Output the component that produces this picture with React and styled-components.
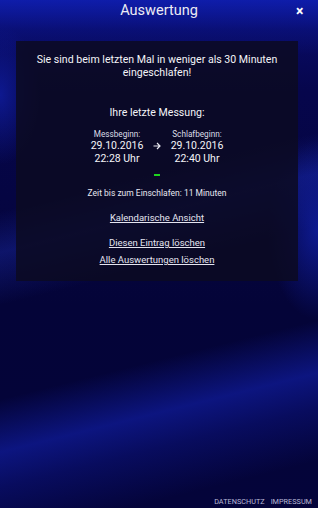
import React from "react";
import styled, { createGlobalStyle } from "styled-components";

const GlobalStyle = createGlobalStyle`
  html, body {
    margin: 0;
    padding: 0;
    height: 100%;
  }
  body {
    font-family: Roboto, "Liberation Sans", sans-serif;
    color: #ffffff;
  }
  #root {
    height: 100%;
  }
`;

const Screen = styled.div`
  position: relative;
  width: 318px;
  height: 508px;
  overflow: hidden;
  display: flex;
  flex-direction: column;
  background:
    linear-gradient(180deg, rgba(16, 34, 190, 0.75) 0px, rgba(12, 24, 150, 0.35) 30px, transparent 55px),
    radial-gradient(ellipse 40px 70px at 0px 95px, rgba(20, 40, 200, 0.55), transparent),
    radial-gradient(ellipse 50px 90px at 318px 230px, rgba(20, 40, 200, 0.6), transparent),
    linear-gradient(166deg, transparent 36%, rgba(30, 50, 190, 0.35) 43%, transparent 52%),
    linear-gradient(166deg, transparent 68%, rgba(18, 32, 175, 0.6) 77%, rgba(14, 24, 150, 0.4) 83%, transparent 92%),
    linear-gradient(180deg, #0a0d70 0%, #06064c 18%, #040438 60%, #04043a 100%);
`;

const Header = styled.div`
  height: 41px;
  display: grid;
  grid-template-columns: 30px 1fr 30px;
  align-items: start;
`;

const Title = styled.h1`
  grid-column: 2;
  margin: 0;
  padding-top: 2px;
  text-align: center;
  font-size: 14.5px;
  font-weight: 400;
  line-height: 18px;
  color: #ececf4;
`;

const Close = styled.span`
  grid-column: 3;
  padding-top: 3px;
  padding-left: 8px;
  font-size: 14px;
  font-weight: 700;
  line-height: 16px;
  color: #ffffff;
`;

const Panel = styled.section`
  margin: 0 20px 0 16px;
  height: 240px;
  box-sizing: border-box;
  padding: 12px 10px 0;
  background: rgba(12, 10, 34, 0.86);
  display: flex;
  flex-direction: column;
  align-items: center;
  text-align: center;
`;

const Notice = styled.p`
  margin: 0;
  font-size: 10.6px;
  line-height: 13px;
  color: #f4f4f8;
`;

const Heading = styled.p`
  margin: 27px 0 0;
  font-size: 10.6px;
  line-height: 13px;
  color: #f4f4f8;
`;

const Compare = styled.div`
  margin-top: 10px;
  display: grid;
  grid-template-columns: 64px 16px 64px;
  align-items: start;
`;

const Column = styled.div`
  display: flex;
  flex-direction: column;
  align-items: center;
`;

const Label = styled.span`
  font-size: 8.2px;
  line-height: 11px;
  color: #dcdce6;
`;

const Big = styled.span`
  font-size: 10.5px;
  line-height: 12.5px;
  color: #f4f4f8;
`;

const Arrow = styled.svg`
  justify-self: center;
  margin-top: 13px;
  width: 8px;
  height: 8px;
`;

const Dash = styled.div`
  margin-top: 9px;
  width: 6px;
  height: 2px;
  background: #1ed41e;
`;

const Small = styled.p`
  margin: 12px 0 0;
  font-size: 8.5px;
  line-height: 10px;
  color: #e8e8f0;
`;

const Link = styled.a`
  margin-top: ${(p) => p.gap || 0}px;
  font-size: 9.5px;
  line-height: 11px;
  color: #e4e4f0;
  text-decoration: underline;
  cursor: pointer;
`;

const Footer = styled.div`
  margin-top: auto;
  padding: 0 6px 2px 0;
  display: flex;
  justify-content: flex-end;
  gap: 6px;
`;

const FootLink = styled.span`
  font-size: 7.3px;
  line-height: 9px;
  color: #b8b8d6;
`;

export default function App() {
  return (
    <Screen>
      <GlobalStyle />
      <Header>
        <Title>Auswertung</Title>
        <Close>×</Close>
      </Header>
      <Panel>
        <Notice>
          Sie sind beim letzten Mal in weniger als 30 Minuten
          <br />
          eingeschlafen!
        </Notice>
        <Heading>Ihre letzte Messung:</Heading>
        <Compare>
          <Column>
            <Label>Messbeginn:</Label>
            <Big>29.10.2016</Big>
            <Big>22:28 Uhr</Big>
          </Column>
          <Arrow viewBox="0 0 8 8">
            <path d="M0.5 4H7M4 1l3 3-3 3" fill="none" stroke="#e8e8f0" strokeWidth="1.2" />
          </Arrow>
          <Column>
            <Label>Schlafbeginn:</Label>
            <Big>29.10.2016</Big>
            <Big>22:40 Uhr</Big>
          </Column>
        </Compare>
        <Dash />
        <Small>Zeit bis zum Einschlafen: 11 Minuten</Small>
        <Link gap={14}>Kalendarische Ansicht</Link>
        <Link gap={14}>Diesen Eintrag löschen</Link>
        <Link gap={6}>Alle Auswertungen löschen</Link>
      </Panel>
      <Footer>
        <FootLink>DATENSCHUTZ</FootLink>
        <FootLink>IMPRESSUM</FootLink>
      </Footer>
    </Screen>
  );
}
